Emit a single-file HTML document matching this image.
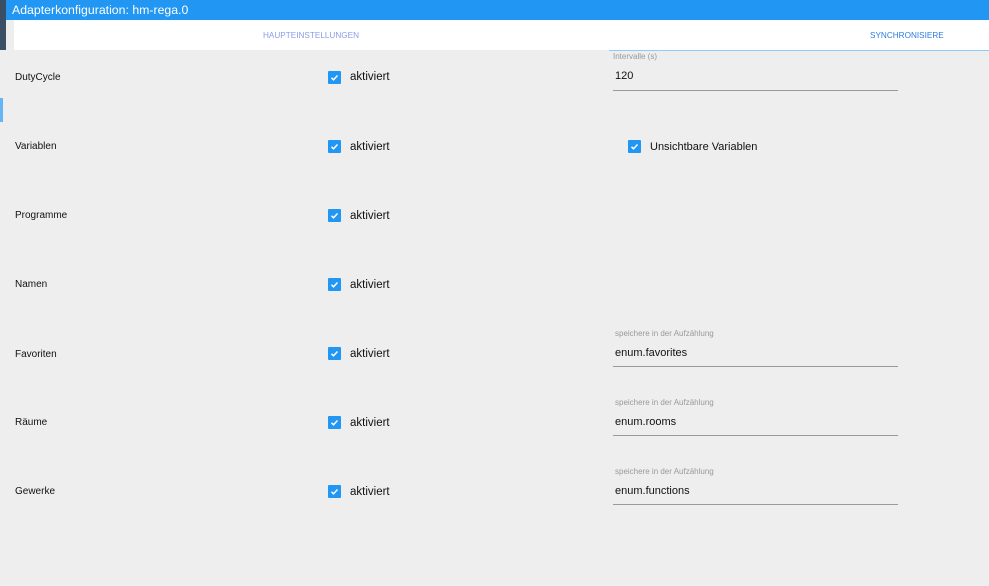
<html><head><style>
body{margin:0;width:989px;height:586px;background:#eee;font-family:"Liberation Sans",sans-serif;position:relative;overflow:hidden}
.a{position:absolute}
.lbl{font-size:10px;color:#111}
.cb{width:13px;height:13px;background:#2196f3;border-radius:1px}
.cb svg{display:block}
.ak{font-size:11.5px;color:#111}
.fl{font-size:8px;color:#999}
.fv{font-size:11px;color:#111}
.ul{height:1px;background:#999;width:285px}
</style></head><body>
<div class="a" style="left:0;top:0;width:6px;height:50px;background:#3a4f63"></div>
<div class="a" style="left:0;top:98px;width:3px;height:24px;background:#64b5f6"></div>
<div class="a" style="left:6px;top:0;width:983px;height:20px;background:#2196f3;color:#fff;font-size:12.3px;line-height:20px;padding-left:6px;box-sizing:border-box">Adapterkonfiguration: hm-rega.0</div>
<div class="a" style="left:14px;top:20px;width:975px;height:30px;background:#fff"></div>
<div class="a" style="left:263px;top:31px;font-size:8.2px;color:#8a9de8">HAUPTEINSTELLUNGEN</div>
<div class="a" style="left:870px;top:31px;font-size:8.2px;color:#2f7be0">SYNCHRONISIERE</div>
<div class="a" style="left:609px;top:50px;width:380px;height:1px;background:#90caf9"></div>

<div class="a fl" style="left:613px;top:52px">Intervalle (s)</div>
<div class="a fv" style="left:615px;top:70px">120</div>
<div class="a ul" style="left:613px;top:90px"></div>

<div class="a cb" style="left:628px;top:140px"><svg width="13" height="13"><path d="M3.5 6.8l2 2 4-4.3" stroke="#fff" stroke-width="1.5" fill="none"/></svg></div>
<div class="a ak" style="left:650px;top:141px;font-size:11px">Unsichtbare Variablen</div>

<div class="a fl" style="left:615px;top:329px">speichere in der Aufzählung</div>
<div class="a fv" style="left:615px;top:347px">enum.favorites</div>
<div class="a ul" style="left:613px;top:366px"></div>
<div class="a fl" style="left:615px;top:398px">speichere in der Aufzählung</div>
<div class="a fv" style="left:615px;top:416px">enum.rooms</div>
<div class="a ul" style="left:613px;top:435px"></div>
<div class="a fl" style="left:615px;top:467px">speichere in der Aufzählung</div>
<div class="a fv" style="left:615px;top:485px">enum.functions</div>
<div class="a ul" style="left:613px;top:504px"></div>

<div class="a lbl" style="left:15px;top:72px">DutyCycle</div>
<div class="a lbl" style="left:15px;top:141px">Variablen</div>
<div class="a lbl" style="left:15px;top:210px">Programme</div>
<div class="a lbl" style="left:15px;top:279px">Namen</div>
<div class="a lbl" style="left:15px;top:349px">Favoriten</div>
<div class="a lbl" style="left:15px;top:417px">Räume</div>
<div class="a lbl" style="left:15px;top:486px">Gewerke</div>

<div class="a cb" style="left:328px;top:71px"><svg width="13" height="13"><path d="M3.5 6.8l2 2 4-4.3" stroke="#fff" stroke-width="1.5" fill="none"/></svg></div><div class="a ak" style="left:350px;top:71px">aktiviert</div>
<div class="a cb" style="left:328px;top:140px"><svg width="13" height="13"><path d="M3.5 6.8l2 2 4-4.3" stroke="#fff" stroke-width="1.5" fill="none"/></svg></div><div class="a ak" style="left:350px;top:141px">aktiviert</div>
<div class="a cb" style="left:328px;top:209px"><svg width="13" height="13"><path d="M3.5 6.8l2 2 4-4.3" stroke="#fff" stroke-width="1.5" fill="none"/></svg></div><div class="a ak" style="left:350px;top:210px">aktiviert</div>
<div class="a cb" style="left:328px;top:278px"><svg width="13" height="13"><path d="M3.5 6.8l2 2 4-4.3" stroke="#fff" stroke-width="1.5" fill="none"/></svg></div><div class="a ak" style="left:350px;top:279px">aktiviert</div>
<div class="a cb" style="left:328px;top:347px"><svg width="13" height="13"><path d="M3.5 6.8l2 2 4-4.3" stroke="#fff" stroke-width="1.5" fill="none"/></svg></div><div class="a ak" style="left:350px;top:348px">aktiviert</div>
<div class="a cb" style="left:328px;top:416px"><svg width="13" height="13"><path d="M3.5 6.8l2 2 4-4.3" stroke="#fff" stroke-width="1.5" fill="none"/></svg></div><div class="a ak" style="left:350px;top:417px">aktiviert</div>
<div class="a cb" style="left:328px;top:485px"><svg width="13" height="13"><path d="M3.5 6.8l2 2 4-4.3" stroke="#fff" stroke-width="1.5" fill="none"/></svg></div><div class="a ak" style="left:350px;top:486px">aktiviert</div>
</body></html>
